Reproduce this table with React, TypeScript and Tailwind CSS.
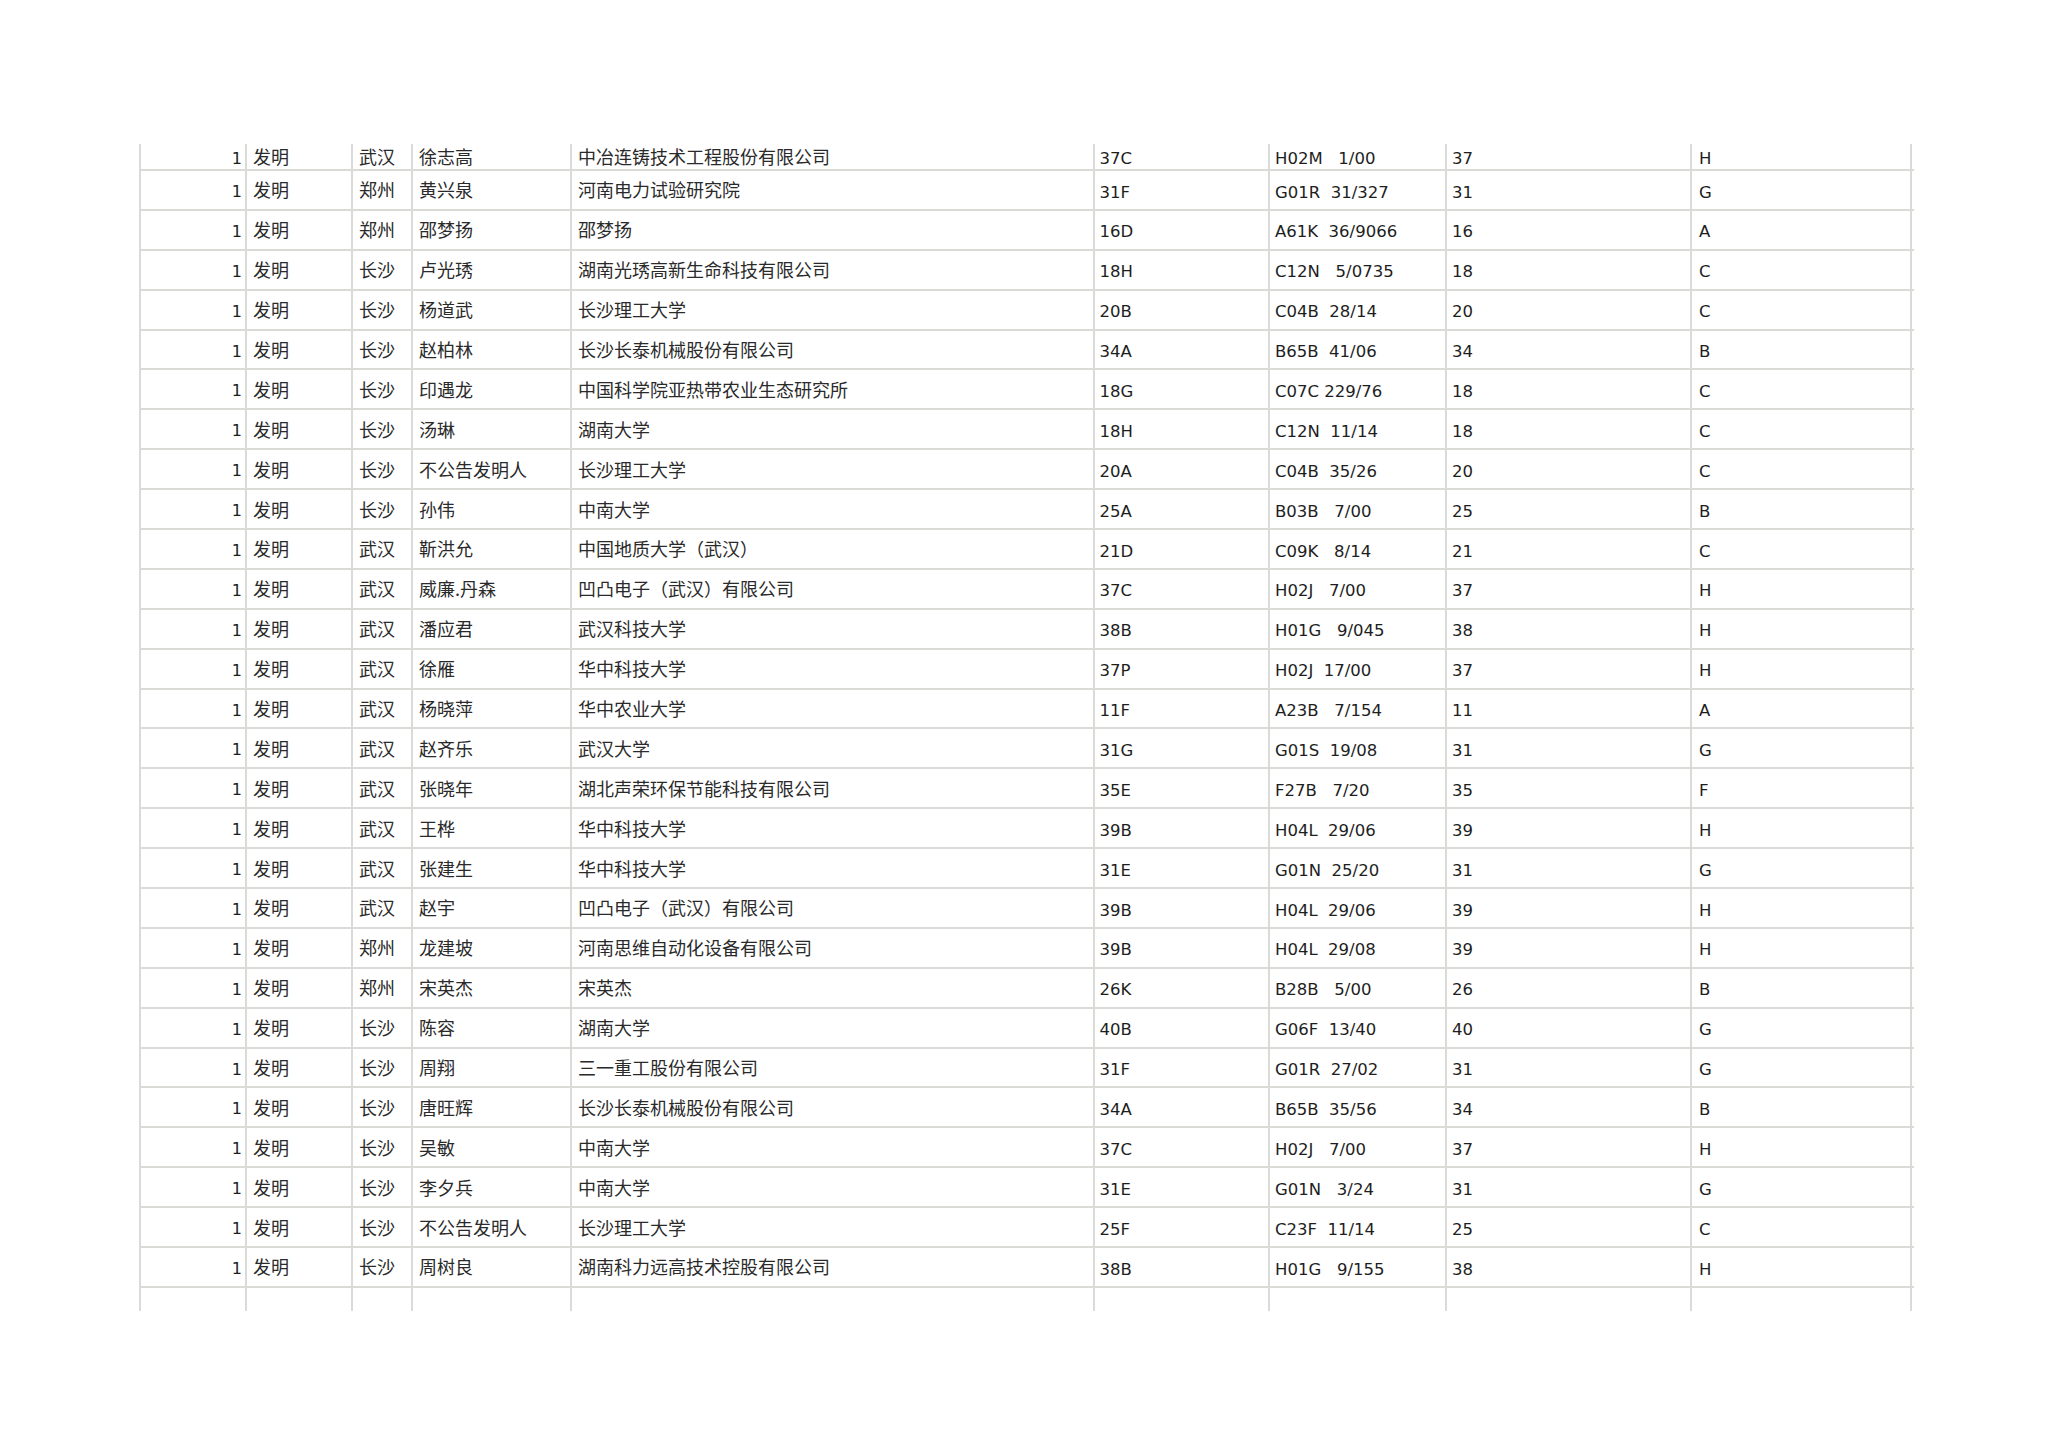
import React from 'react';

type Row = [string, string, string, string, string, string, string];

// 城市, 发明人, 申请人, 分类, IPC, 大类号, 部
const rows: Row[] = [
  ['武汉', '徐志高', '中冶连铸技术工程股份有限公司', '37C', 'H02M   1/00', '37', 'H'],
  ['郑州', '黄兴泉', '河南电力试验研究院', '31F', 'G01R  31/327', '31', 'G'],
  ['郑州', '邵梦扬', '邵梦扬', '16D', 'A61K  36/9066', '16', 'A'],
  ['长沙', '卢光琇', '湖南光琇高新生命科技有限公司', '18H', 'C12N   5/0735', '18', 'C'],
  ['长沙', '杨道武', '长沙理工大学', '20B', 'C04B  28/14', '20', 'C'],
  ['长沙', '赵柏林', '长沙长泰机械股份有限公司', '34A', 'B65B  41/06', '34', 'B'],
  ['长沙', '印遇龙', '中国科学院亚热带农业生态研究所', '18G', 'C07C 229/76', '18', 'C'],
  ['长沙', '汤琳', '湖南大学', '18H', 'C12N  11/14', '18', 'C'],
  ['长沙', '不公告发明人', '长沙理工大学', '20A', 'C04B  35/26', '20', 'C'],
  ['长沙', '孙伟', '中南大学', '25A', 'B03B   7/00', '25', 'B'],
  ['武汉', '靳洪允', '中国地质大学（武汉）', '21D', 'C09K   8/14', '21', 'C'],
  ['武汉', '威廉.丹森', '凹凸电子（武汉）有限公司', '37C', 'H02J   7/00', '37', 'H'],
  ['武汉', '潘应君', '武汉科技大学', '38B', 'H01G   9/045', '38', 'H'],
  ['武汉', '徐雁', '华中科技大学', '37P', 'H02J  17/00', '37', 'H'],
  ['武汉', '杨晓萍', '华中农业大学', '11F', 'A23B   7/154', '11', 'A'],
  ['武汉', '赵齐乐', '武汉大学', '31G', 'G01S  19/08', '31', 'G'],
  ['武汉', '张晓年', '湖北声荣环保节能科技有限公司', '35E', 'F27B   7/20', '35', 'F'],
  ['武汉', '王桦', '华中科技大学', '39B', 'H04L  29/06', '39', 'H'],
  ['武汉', '张建生', '华中科技大学', '31E', 'G01N  25/20', '31', 'G'],
  ['武汉', '赵宇', '凹凸电子（武汉）有限公司', '39B', 'H04L  29/06', '39', 'H'],
  ['郑州', '龙建坡', '河南思维自动化设备有限公司', '39B', 'H04L  29/08', '39', 'H'],
  ['郑州', '宋英杰', '宋英杰', '26K', 'B28B   5/00', '26', 'B'],
  ['长沙', '陈容', '湖南大学', '40B', 'G06F  13/40', '40', 'G'],
  ['长沙', '周翔', '三一重工股份有限公司', '31F', 'G01R  27/02', '31', 'G'],
  ['长沙', '唐旺辉', '长沙长泰机械股份有限公司', '34A', 'B65B  35/56', '34', 'B'],
  ['长沙', '吴敏', '中南大学', '37C', 'H02J   7/00', '37', 'H'],
  ['长沙', '李夕兵', '中南大学', '31E', 'G01N   3/24', '31', 'G'],
  ['长沙', '不公告发明人', '长沙理工大学', '25F', 'C23F  11/14', '25', 'C'],
  ['长沙', '周树良', '湖南科力远高技术控股有限公司', '38B', 'H01G   9/155', '38', 'H'],
];

const cols = 'grid grid-cols-[106px_106px_60px_159px_522.5px_175.5px_177px_245px_222px] border-b-2 border-[#dadad6]';
const cell = 'flex items-center border-l-2 border-[#dadad6] overflow-hidden whitespace-pre';
const cjk = `${cell} pl-[6px] text-[18px] text-[#2a2a2a] font-['Noto_Sans_CJK_SC',sans-serif]`;
const lat = `${cell} pl-[5px] pt-[6px] text-[16.5px] text-[#1e1e1e] font-['DejaVu_Sans',sans-serif]`;

export default function App() {
  return (
    <div className="min-h-[1447px] bg-white pt-[144px] pl-[139px]">
      {/* sheet is cut off at the top and bottom of the page */}
      <div className="w-[1775px] h-[1167px] overflow-hidden">
        {rows.map((r, idx) => (
          <div key={idx} className={`${cols} ${idx === 0 ? 'h-[27px]' : 'h-[39.9px]'}`}>
            <div className={`${cell} justify-end pr-[3px] pt-[4px] text-[16px] text-[#1e1e1e] font-['DejaVu_Sans',sans-serif]`}>1</div>
            <div className={cjk}>发明</div>
            <div className={cjk}>{r[0]}</div>
            <div className={cjk}>{r[1]}</div>
            <div className={cjk}>{r[2]}</div>
            <div className={lat}>{r[3]}</div>
            <div className={lat}>{r[4]}</div>
            <div className={lat}>{r[5]}</div>
            <div className={`${lat} border-r-2 pl-[7px]`}>{r[6]}</div>
          </div>
        ))}
        <div className={`${cols} h-[39.9px]`}>
          {Array.from({ length: 9 }).map((_, i) => (
            <div key={i} className={`${cell} ${i === 8 ? 'border-r-2' : ''}`} />
          ))}
        </div>
      </div>
    </div>
  );
}
